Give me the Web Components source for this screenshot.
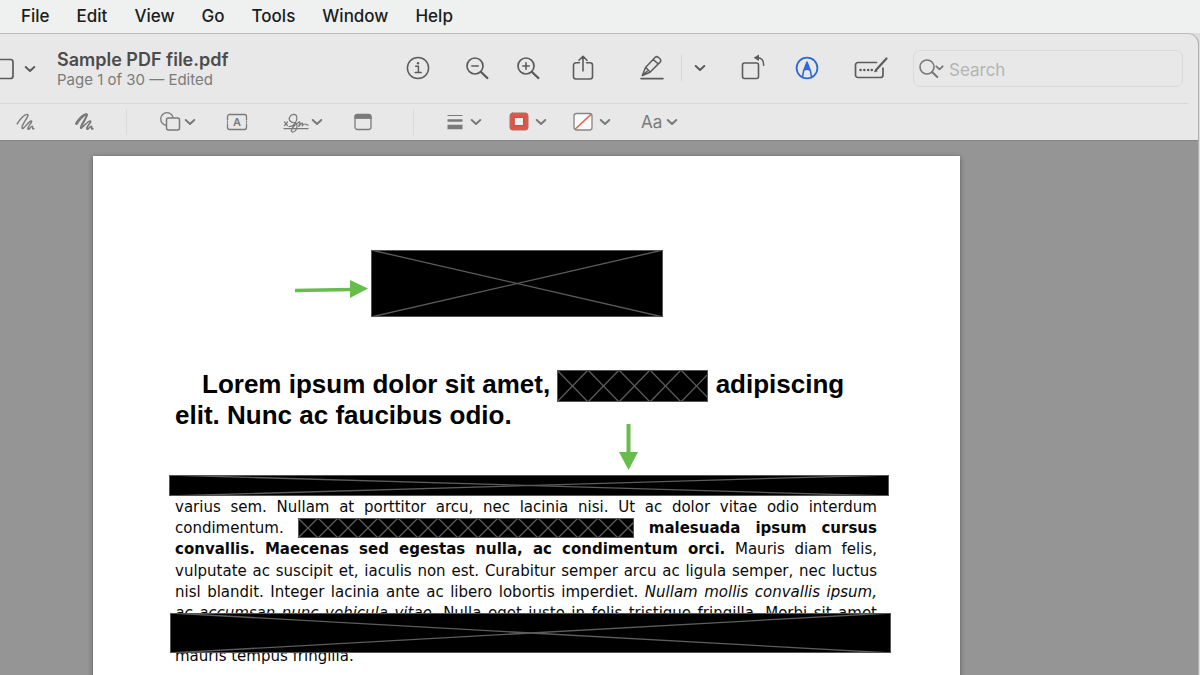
<!DOCTYPE html>
<html lang="en">
<head>
<meta charset="utf-8">
<title>Sample PDF file.pdf</title>
<style>
  html, body { margin: 0; height: 100%; }
  body { background: #eef0ef; font-family: Inter, "Liberation Sans", sans-serif; overflow: hidden; }
</style>
</head>
<body>
<preview-app></preview-app>

<script>
const define = (name, html, setup) => {
  const tpl = document.createElement('template');
  tpl.innerHTML = html;
  customElements.define(name, class extends HTMLElement {
    constructor() {
      super();
      this.attachShadow({ mode: 'open' }).append(tpl.content.cloneNode(true));
    }
    connectedCallback() { if (setup) setup(this, this.shadowRoot); }
  });
};

const icons = {
  sidebar: [24, '<rect x="-8" y="2.500" width="21" height="19" rx="2.5" stroke-width="1.7"/>'],
  chevron: [12, '<path d="M1.700 10 6 14l4.300-4" stroke-width="2"/>'],
  info: [24, '<circle cx="12" cy="12" r="10.6" stroke-width="1.5"/><path d="M9.7 10.2h2.7v6.2M9.2 16.6h6" stroke-width="1.5"/><circle cx="12" cy="7.2" r="1.2" fill="currentColor" stroke="none"/>'],
  zoomout: [24, '<circle cx="10" cy="10" r="8" stroke-width="1.7"/><path d="M16 16l6.3 6" stroke-width="2.4"/><path d="M6.8 10h6.4" stroke-width="1.6"/>'],
  zoomin: [24, '<circle cx="10" cy="10" r="8" stroke-width="1.7"/><path d="M16 16l6.3 6" stroke-width="2.4"/><path d="M6.8 10h6.4M10 6.8v6.4" stroke-width="1.6"/>'],
  share: [24, '<path d="M8.4 6.8H5a2.5 2.5 0 0 0-2.5 2.500V20.500A2.500 2.500 0 0 0 5 23h14a2.500 2.500 0 0 0 2.500-2.500V9.300A2.500 2.500 0 0 0 19 6.800h-3.400M12 15V.5M8 4.300 12 .300l4 4" stroke-width="1.600"/>'],
  markup: [24, '<path d="M2.300 19.500l3.200-8L15.200 1.200q1.400-1.200 3 .1l2 1.700q1.300 1.500.1 2.900L10 16.200zM13 3.400l5.300 4.600M5.800 11.500l4 4.300M2.300 19.500l4.900-4.300" stroke-width="1.500"/><path d="M1 22.600h22" stroke-width="1.600"/>'],
  rotate: [24, '<rect x="1.500" y="7" width="16" height="15.500" rx="2" stroke-width="1.600"/><path d="M16 1.700c4.500-.3 6.800 2.600 6.600 7.500" stroke-width="1.500"/><path d="M18-1.500v6.600L12.600 1.800z" fill="currentColor" stroke="none"/>'],
  pen: [24, '<circle cx="12" cy="12" r="10.400" stroke-width="1.800"/><path d="M7.500 21l1.200-6.500L12 6l3.300 8.500 1.200 6.500M8.700 14.300q3.300-2.200 6.600 0" stroke-width="1.500"/><path d="M12 6.500l2.600 7q-2.600-1-5.200 0z" fill="currentColor" stroke="none"/>'],
  form: [34, '<path d="M22.500 6.500H4A2.500 2.500 0 0 0 1.500 9v10A2.500 2.500 0 0 0 4 21.500h22.500A2.500 2.500 0 0 0 29 19v-7" stroke-width="1.700"/><path d="M22.500 13.500L32.500 2.500" stroke-width="2.200"/><path d="M20.800 15.500l.6-2 1.500 1.300z" fill="currentColor"/><path d="M6.500 14h.1M10.300 14h.1M14.100 14h.1M17.700 14h.1" stroke-width="2.500"/>'],
  search: [24, '<circle cx="9" cy="11" r="7" stroke-width="1.600"/><path d="M14 16l5.300 5" stroke-width="2"/><path d="M18.300 10.300l3.200 3.100 3.200-3.100" stroke-width="1.800"/>'],
  sketch: [20, '<path d="M1.200 13.800C4 9.300 9 3.500 11.500 4.500S5.800 14 6 17.800s7-7.300 9.200-6.800-4 5.500-3.300 7.700 3.300-3 4.500-2.400-1 3.700 1.500 2.400" stroke-width="1.400"/>'],
  draw: [20, '<path d="M1.500 13.500C4 9.300 9 4 11.300 4.700" stroke-width="3"/><path d="M11.500 4.500C13.500 6 6 14 6 17.800" stroke-width="2.300"/><path d="M6 17.800c.2 1.500 7-7.300 9.200-6.800s-4 5.500-3.300 7.700 3.300-3 4.500-2.400-1 3.700 1.500 2.400" stroke-width="1.700"/>'],
  shapes: [22, '<circle cx="8" cy="9" r="6.300" stroke-width="1.300"/><rect x="7.500" y="8" width="13" height="12" rx="2" fill="#e8e8e8" stroke-width="1.500"/>'],
  text: [22, '<path d="M1.500 10V6.500a2 2 0 0 1 2-2h15a2 2 0 0 1 2 2V10M1.500 14v3.500a2 2 0 0 0 2 2h15a2 2 0 0 0 2-2V14M1.500 11.700v.6M20.500 11.700v.6" stroke-width="1.300"/><text x="11" y="16" font-size="11" font-weight="600" text-anchor="middle" fill="currentColor" stroke="none" font-family="Inter, sans-serif">A</text>'],
  sign: [26, '<path d="M1 18.700h24M1.500 12l3 3.500M4.500 12l-3 3.500" stroke-width="1.200"/><path d="M6 16.500c5 .5 8.500-6 7.800-9.500C13 3 8 4 6.500 7.500s3 5.500 5 5.200c4 .8 3 8.300-1.500 9.300-3 .5-2-5 4.500-8.800 2.500-2.200 3-1.200 2 .8l-.7 2.500c2-3 3.800-4.500 3.800-2.800l-.5 2.300c2.500-3.500 3.500-1.500 5.900-.9" stroke-width="1.200"/>'],
  note: [20, '<rect x="2" y="4.500" width="16" height="15" rx="2.500" stroke-width="1.300"/><path d="M2 8V6.500q0-2 2-2h12q2 0 2 2V8z" fill="currentColor"/>'],
  lines: [18, '<g stroke-linecap="butt"><path d="M1.500 5.500h15" stroke-width="1.200"/><path d="M1.500 10.500h15" stroke-width="2.500"/><path d="M1.500 17h15" stroke-width="4.500"/></g>'],
  border: [20, '<rect x="1" y="3" width="18" height="17" rx="2.500" fill="#d9584c" stroke="#b96b63" stroke-width="1"/><rect x="5.500" y="7.500" width="9" height="8" fill="#eeeeee" stroke="#bb5147" stroke-width="1"/>'],
  fill: [20, '<rect x="1" y="3.500" width="18" height="16.500" rx="2.500" fill="#fafafa" stroke="#858585" stroke-width="1.300"/><path d="M2.500 18.800L17.500 4.800" stroke="#e0705c" stroke-width="1.600"/>']
};

define('ui-icon', `
  <style>
    :host { display: block; flex: none; }
    svg { display: block; height: 24px; overflow: visible; fill: none; stroke: currentColor; stroke-linecap: round; stroke-linejoin: round; }
  </style>
  <span></span>`, (el, root) => {
  const [w, body] = icons[el.getAttribute('name')];
  root.querySelector('span').innerHTML = `<svg aria-hidden="true" width="${w}" viewBox="0 0 ${w} 24">${body}</svg>`;
});

define('tool-button', `
  <style>
    :host { display: block; flex: none; }
    button { display: flex; align-items: center; gap: var(--gap, 6px); padding: 0; border: 0; background: none; color: inherit; font: inherit; }
  </style>
  <button type="button"><slot></slot></button>`, (el, root) => {
  root.querySelector('button').setAttribute('aria-label', el.getAttribute('label'));
});

define('menu-bar', `
  <style>
    :host { display: block; flex: none; background: #eef1ef; color: #1c1c1c; }
    nav { display: flex; align-items: center; gap: 27px; height: 33px; padding-left: 21px; box-sizing: border-box; }
    button { padding: 0 0 2px; border: 0; background: none; color: inherit; font: 500 17px/30px Inter, sans-serif; }
  </style>
  <nav aria-label="Menu"><button>File</button><button>Edit</button><button>View</button><button>Go</button><button>Tools</button><button>Window</button><button>Help</button></nav>`);

define('search-field', `
  <style>
    :host { display: block; flex: none; width: 270px; box-sizing: border-box; }
    label { display: flex; align-items: center; height: 37px; box-sizing: border-box; padding-left: 4px; gap: 7px; border: 1px solid #d9d9d9; border-radius: 7px; color: #777; }
    ui-icon { padding-bottom: 2px; }
    input { flex: 1; min-width: 0; height: 26px; padding: 2px 0 0; box-sizing: border-box; border: 0; outline: 0; background: none; font: 17px/24px Inter, sans-serif; color: #444; }
    input::placeholder { color: #b4b4b4; opacity: 1; }
  </style>
  <label><ui-icon name="search"></ui-icon><input type="search" placeholder="Search" aria-label="Search"></label>`);

define('title-toolbar', `
  <style>
    :host { display: flex; align-items: center; height: 69px; box-sizing: border-box; padding-right: 15px; color: #5c5c5c; }
    .side { margin-right: 21px; --gap: 0px; }
    hgroup { flex: 1; margin: 0; padding-top: 2px; min-width: 0; white-space: nowrap; }
    h1 { margin: 0; font: 600 18px/20px Inter, sans-serif; color: #4c4c4c; }
    p { margin: 0; font: 15px/20px Inter, sans-serif; color: #7b7b7b; }
    .tools { display: flex; align-items: center; padding-bottom: 2px; }
    .rule { width: 1px; height: 26px; margin: 0 12px 0 17px; background: #d6d6d6; }
    .out { margin-left: 35px; } .in { margin-left: 27px; } .share { margin-left: 31px; }
    .mark { margin-left: 45px; } .rot { margin-left: 35px; } .pen { margin-left: 30px; color: #2c6ad4; } .form { margin: 0 25px 0 35px; }
  </style>
  <tool-button class="side" label="Sidebar"><ui-icon name="sidebar"></ui-icon><ui-icon name="chevron"></ui-icon></tool-button>
  <hgroup><h1>Sample PDF file.pdf</h1><p>Page 1 of 30 — Edited</p></hgroup>
  <div class="tools">
    <tool-button label="Info"><ui-icon name="info"></ui-icon></tool-button>
    <tool-button class="out" label="Zoom out"><ui-icon name="zoomout"></ui-icon></tool-button>
    <tool-button class="in" label="Zoom in"><ui-icon name="zoomin"></ui-icon></tool-button>
    <tool-button class="share" label="Share"><ui-icon name="share"></ui-icon></tool-button>
    <tool-button class="mark" label="Highlight"><ui-icon name="markup"></ui-icon></tool-button>
    <div class="rule"></div>
    <tool-button label="Highlight options"><ui-icon name="chevron"></ui-icon></tool-button>
    <tool-button class="rot" label="Rotate"><ui-icon name="rotate"></ui-icon></tool-button>
    <tool-button class="pen" label="Markup"><ui-icon name="pen"></ui-icon></tool-button>
    <tool-button class="form" label="Form filling"><ui-icon name="form"></ui-icon></tool-button>
  </div>
  <search-field></search-field>`);

define('markup-toolbar', `
  <style>
    :host { display: flex; align-items: center; height: 37px; box-sizing: border-box; margin-right: 10px; padding-left: 16px; border-top: 1px solid #d8d8d8; color: #7a7a7a; font: 17px/24px Inter, sans-serif; }
    .draw { margin-left: 39px; }
    .rule { width: 1px; height: 26px; background: #dadada; margin: 0 32px 0 31px; }
    .gap { margin-left: 30px; }
  </style>
  <tool-button label="Sketch"><ui-icon name="sketch"></ui-icon></tool-button>
  <tool-button class="draw" label="Draw"><ui-icon name="draw"></ui-icon></tool-button>
  <div class="rule"></div>
  <tool-button label="Shapes" style="--gap:3px"><ui-icon name="shapes"></ui-icon><ui-icon name="chevron"></ui-icon></tool-button>
  <tool-button class="gap" label="Text"><ui-icon name="text"></ui-icon></tool-button>
  <tool-button label="Sign" style="margin-left:35px;--gap:2px"><ui-icon name="sign"></ui-icon><ui-icon name="chevron"></ui-icon></tool-button>
  <tool-button class="gap" label="Note"><ui-icon name="note"></ui-icon></tool-button>
  <div class="rule" style="margin-left:40px"></div>
  <tool-button label="Line style"><ui-icon name="lines"></ui-icon><ui-icon name="chevron"></ui-icon></tool-button>
  <tool-button label="Border colour" style="margin-left:27px"><ui-icon name="border"></ui-icon><ui-icon name="chevron"></ui-icon></tool-button>
  <tool-button label="Fill colour" style="margin-left:26px"><ui-icon name="fill"></ui-icon><ui-icon name="chevron"></ui-icon></tool-button>
  <tool-button class="gap" label="Text style" style="--gap:4px">Aa<ui-icon name="chevron"></ui-icon></tool-button>`);

/* A blacked-out area: one large cross, or a row of crosses when "step" is set. */
define('redaction-box', `
  <style>
    :host { display: block; background: #000; outline: 1px solid #555; outline-offset: -1px; }
    svg { display: block; width: 100%; height: 100%; }
    line { stroke: #5c5c5c; stroke-width: 1.3; }
  </style>
  <svg aria-hidden="true"></svg>`, (el, root) => {
  const step = +el.getAttribute('step');
  let out = '';
  if (!step) out = '<line x1="0" y1="0" x2="100%" y2="100%"/><line x1="0" y1="100%" x2="100%" y2="0"/>';
  else for (let x = 0; x < 340; x += step)
    out += `<line x1="${x}" y1="0" x2="${x + step}" y2="100%"/><line x1="${x}" y1="100%" x2="${x + step}" y2="0"/>`;
  root.querySelector('svg').innerHTML = out;
});

define('text-line', `
  <style>
    :host { display: block; height: 21px; line-height: 22px; white-space: nowrap; text-align: justify; text-align-last: justify; }
    :host(:nth-of-type(3n)) { height: 22px; }
    :host([last]) { text-align-last: left; }
  </style>
  <slot></slot>`);

define('pdf-page', `
  <style>
    :host { display: block; position: relative; box-sizing: border-box; min-height: 540px; padding: 94px 83px 0 82px; background: #fff; box-shadow: 0 1px 5px #0006; color: #0a0a0a; }
    .logo { width: 292px; height: 67px; margin: 0 auto 52px 196px; }
    h2 { margin: 0 0 45px; text-indent: 27px; font: 700 26px/30px "Liberation Sans", sans-serif; color: #000; }
    h2 redaction-box { display: inline-block; width: 151px; height: 32px; margin: -4px 0 -2px; vertical-align: -7px; }
    .first { height: 21px; margin: 0 -12px 0 -6px; }
    .body { font: 15px/22px "DejaVu Sans", sans-serif; }
    .inline { display: inline-block; width: 336px; height: 20px; vertical-align: -5px; }
    .last { position: absolute; left: 77px; right: 69px; top: 457px; height: 40px; }
    .arrow { position: absolute; fill: #66bd4a; stroke: #66bd4a; }
    .right { left: 202px; top: 123px; }
    .down { left: 526px; top: 268px; }
  </style>
  <redaction-box class="logo"></redaction-box>
  <h2>Lorem ipsum dolor sit amet, <redaction-box step="31"></redaction-box> adipiscing<br><span>elit. Nunc ac faucibus odio.</span></h2>
  <redaction-box class="first"></redaction-box>
  <div class="body">
    <text-line>varius sem. Nullam at porttitor arcu, nec lacinia nisi. Ut ac dolor vitae odio interdum</text-line>
    <text-line>condimentum. <redaction-box class="inline" step="20"></redaction-box> <b>malesuada ipsum cursus</b></text-line>
    <text-line><b>convallis. Maecenas sed egestas nulla, ac condimentum orci.</b> Mauris diam felis,</text-line>
    <text-line>vulputate ac suscipit et, iaculis non est. Curabitur semper arcu ac ligula semper, nec luctus</text-line>
    <text-line>nisl blandit. Integer lacinia ante ac libero lobortis imperdiet. <i>Nullam mollis convallis ipsum,</i></text-line>
    <text-line><i>ac accumsan nunc vehicula vitae.</i> Nulla eget justo in felis tristique fringilla. Morbi sit amet</text-line>
    <text-line></text-line>
    <text-line last>mauris tempus fringilla.</text-line>
  </div>
  <redaction-box class="last"></redaction-box>
  <svg class="arrow right" width="74" height="20" aria-hidden="true"><path d="M0 11.500 56 10.500" stroke-width="3.500"/><path d="M55 1v18L73 9.500z" stroke="none"/></svg>
  <svg class="arrow down" width="20" height="46" aria-hidden="true"><path d="M9.500 0v30" stroke-width="4"/><path d="M0 28h19L9.500 46z" stroke="none"/></svg>`);

define('preview-app', `
  <style>
    :host { display: flex; flex-direction: column; height: 100vh; overflow: hidden; background: #dedede; }
    .window { flex: 1; min-height: 0; display: flex; flex-direction: column; margin-right: 1px; border-top: 1px solid #bcbcbc; border-right: 1px solid #b0b0b0; border-radius: 0 11px 0 0; background: #e8e8e8; overflow: hidden; }
    header { flex: none; border-bottom: 1px solid #858585; }
    main { flex: 1; min-height: 0; padding: 15px 238px 0 93px; background: #959595; overflow: hidden; }
  </style>
  <menu-bar></menu-bar>
  <div class="window">
    <header><title-toolbar></title-toolbar><markup-toolbar></markup-toolbar></header>
    <main><pdf-page></pdf-page></main>
  </div>`);
</script>
</body>
</html>
